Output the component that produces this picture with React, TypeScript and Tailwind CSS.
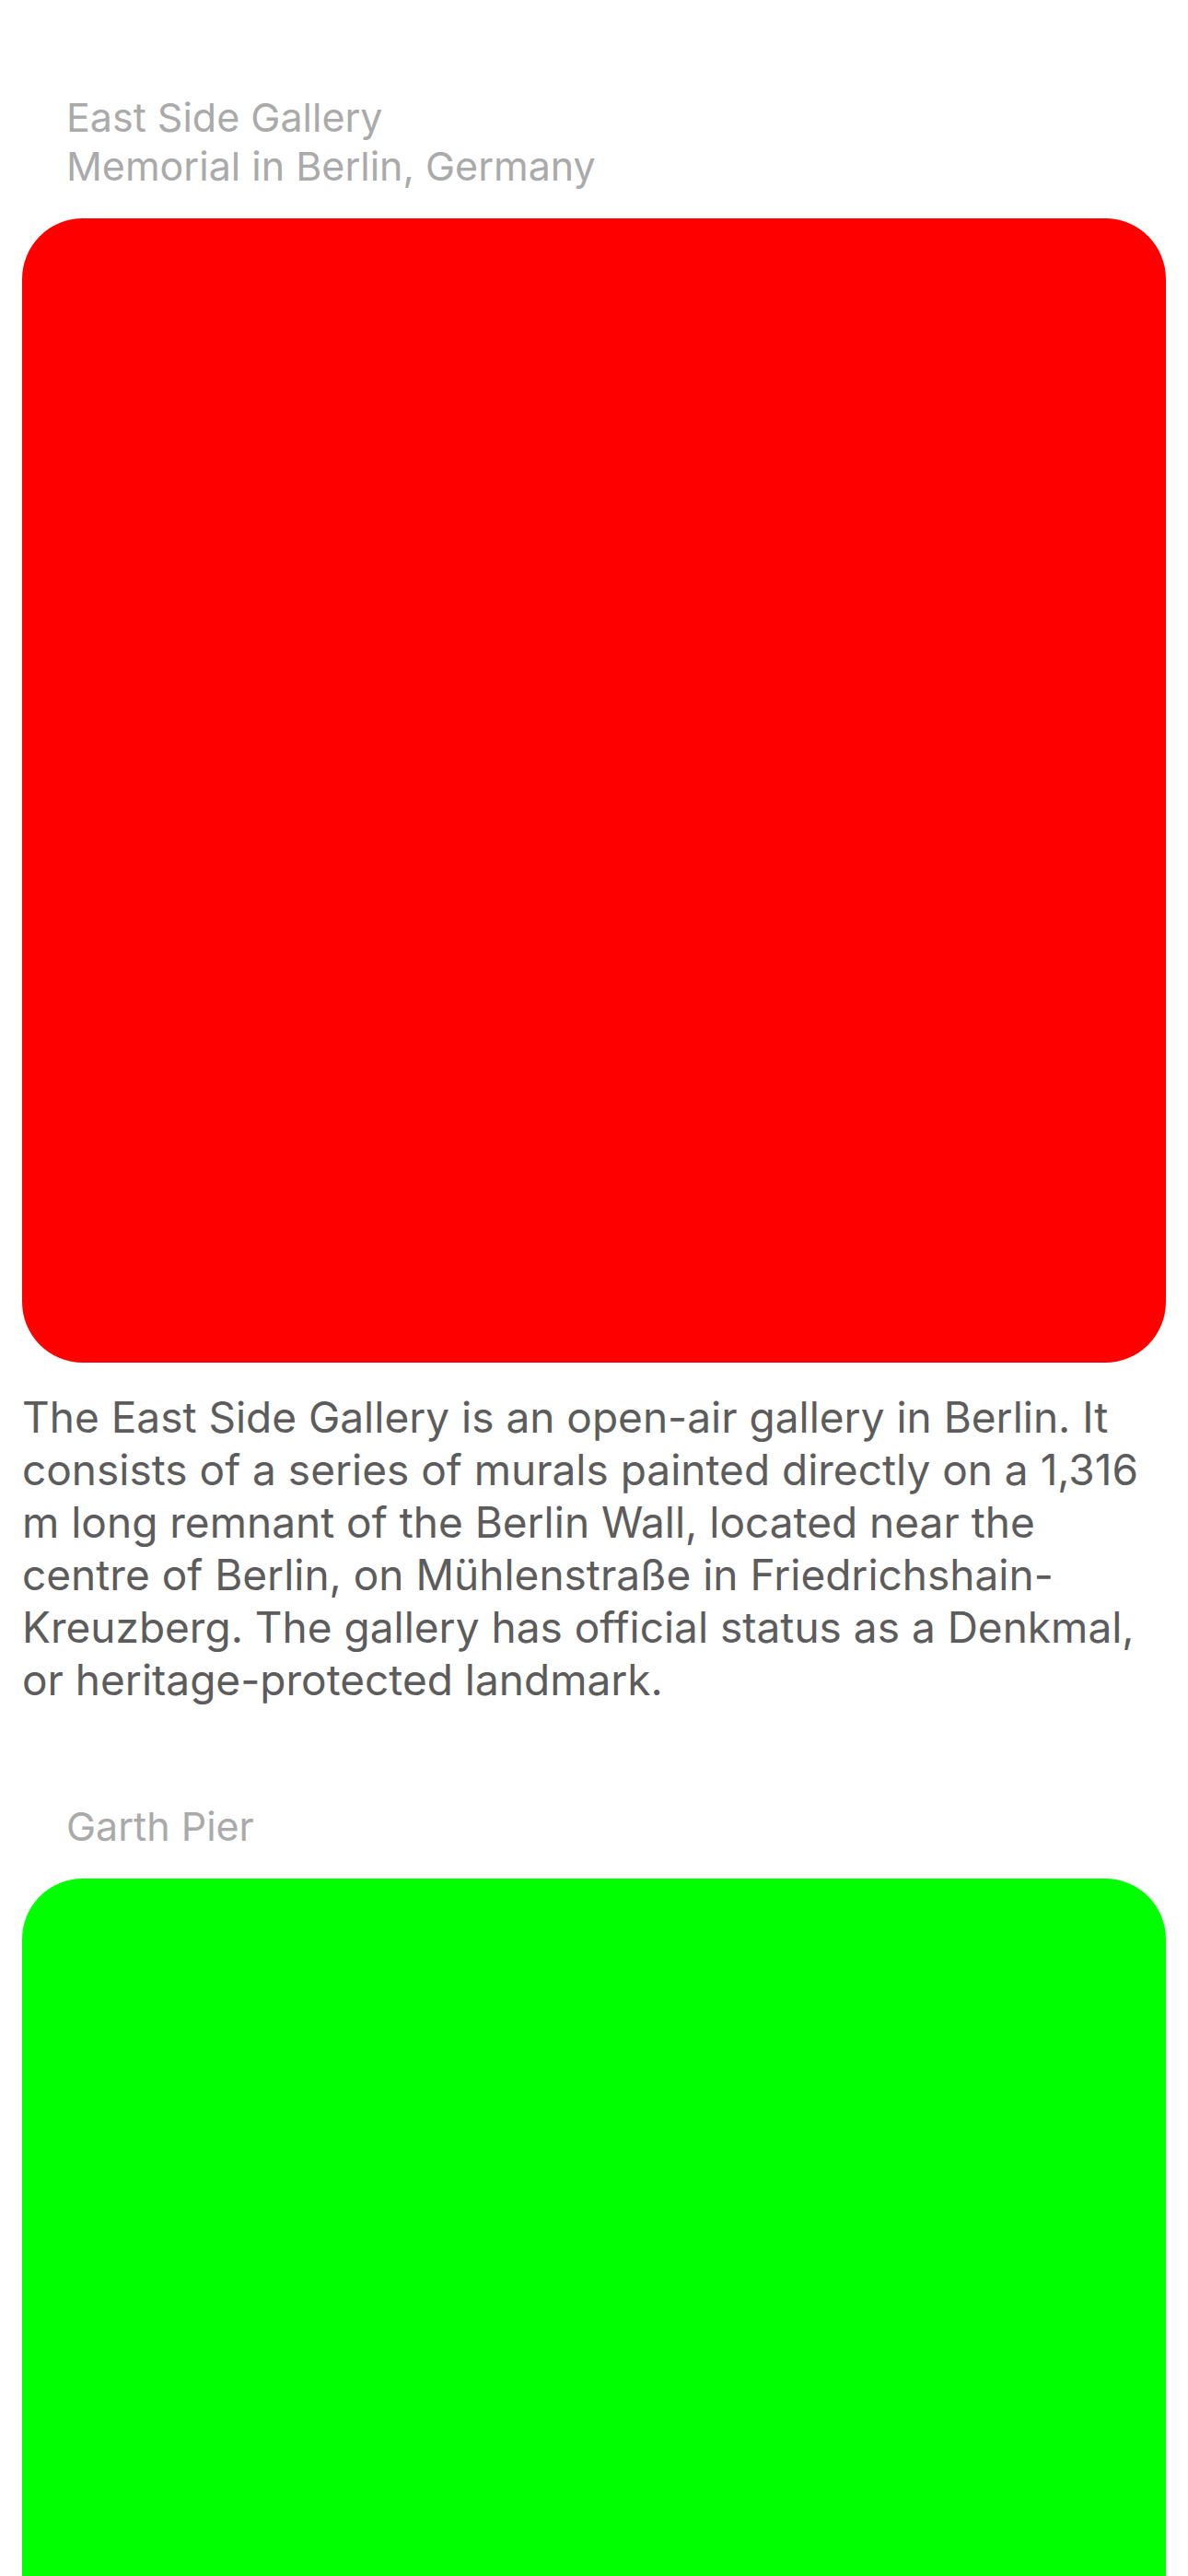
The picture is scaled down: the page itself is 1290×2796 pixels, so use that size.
type Place = {
  title: string;
  subtitle?: string;
  color: string;
  description?: string;
};

const places: Place[] = [
  {
    title: "East Side Gallery",
    subtitle: "Memorial in Berlin, Germany",
    color: "bg-[#ff0000]",
    description:
      "The East Side Gallery is an open-air gallery in Berlin. It consists of a series of murals painted directly on a 1,316 m long remnant of the Berlin Wall, located near the centre of Berlin, on Mühlenstraße in Friedrichshain-Kreuzberg. The gallery has official status as a Denkmal, or heritage-protected landmark.",
  },
  { title: "Garth Pier", color: "bg-[#00ff00]" },
];

function PlaceSection({ title, subtitle, color, description }: Place) {
  return (
    <section>
      <header className="px-12 pb-[30px] text-[43px] leading-[53px] text-[#aaaaaa]">
        <h2>{title}</h2>
        {subtitle && <p>{subtitle}</p>}
      </header>
      <div className={`aspect-square w-full rounded-[66px] ${color}`} />
      {description && (
        <p className="pt-[31px] text-[46px] leading-[57px] text-[#5c5c5c]">{description}</p>
      )}
    </section>
  );
}

export default function App() {
  return (
    <main className="flex h-screen flex-col gap-[104px] overflow-y-auto bg-white px-6 pt-[101px] font-['Inter',sans-serif] [scrollbar-width:none]">
      {places.map((place) => (
        <PlaceSection key={place.title} {...place} />
      ))}
    </main>
  );
}
